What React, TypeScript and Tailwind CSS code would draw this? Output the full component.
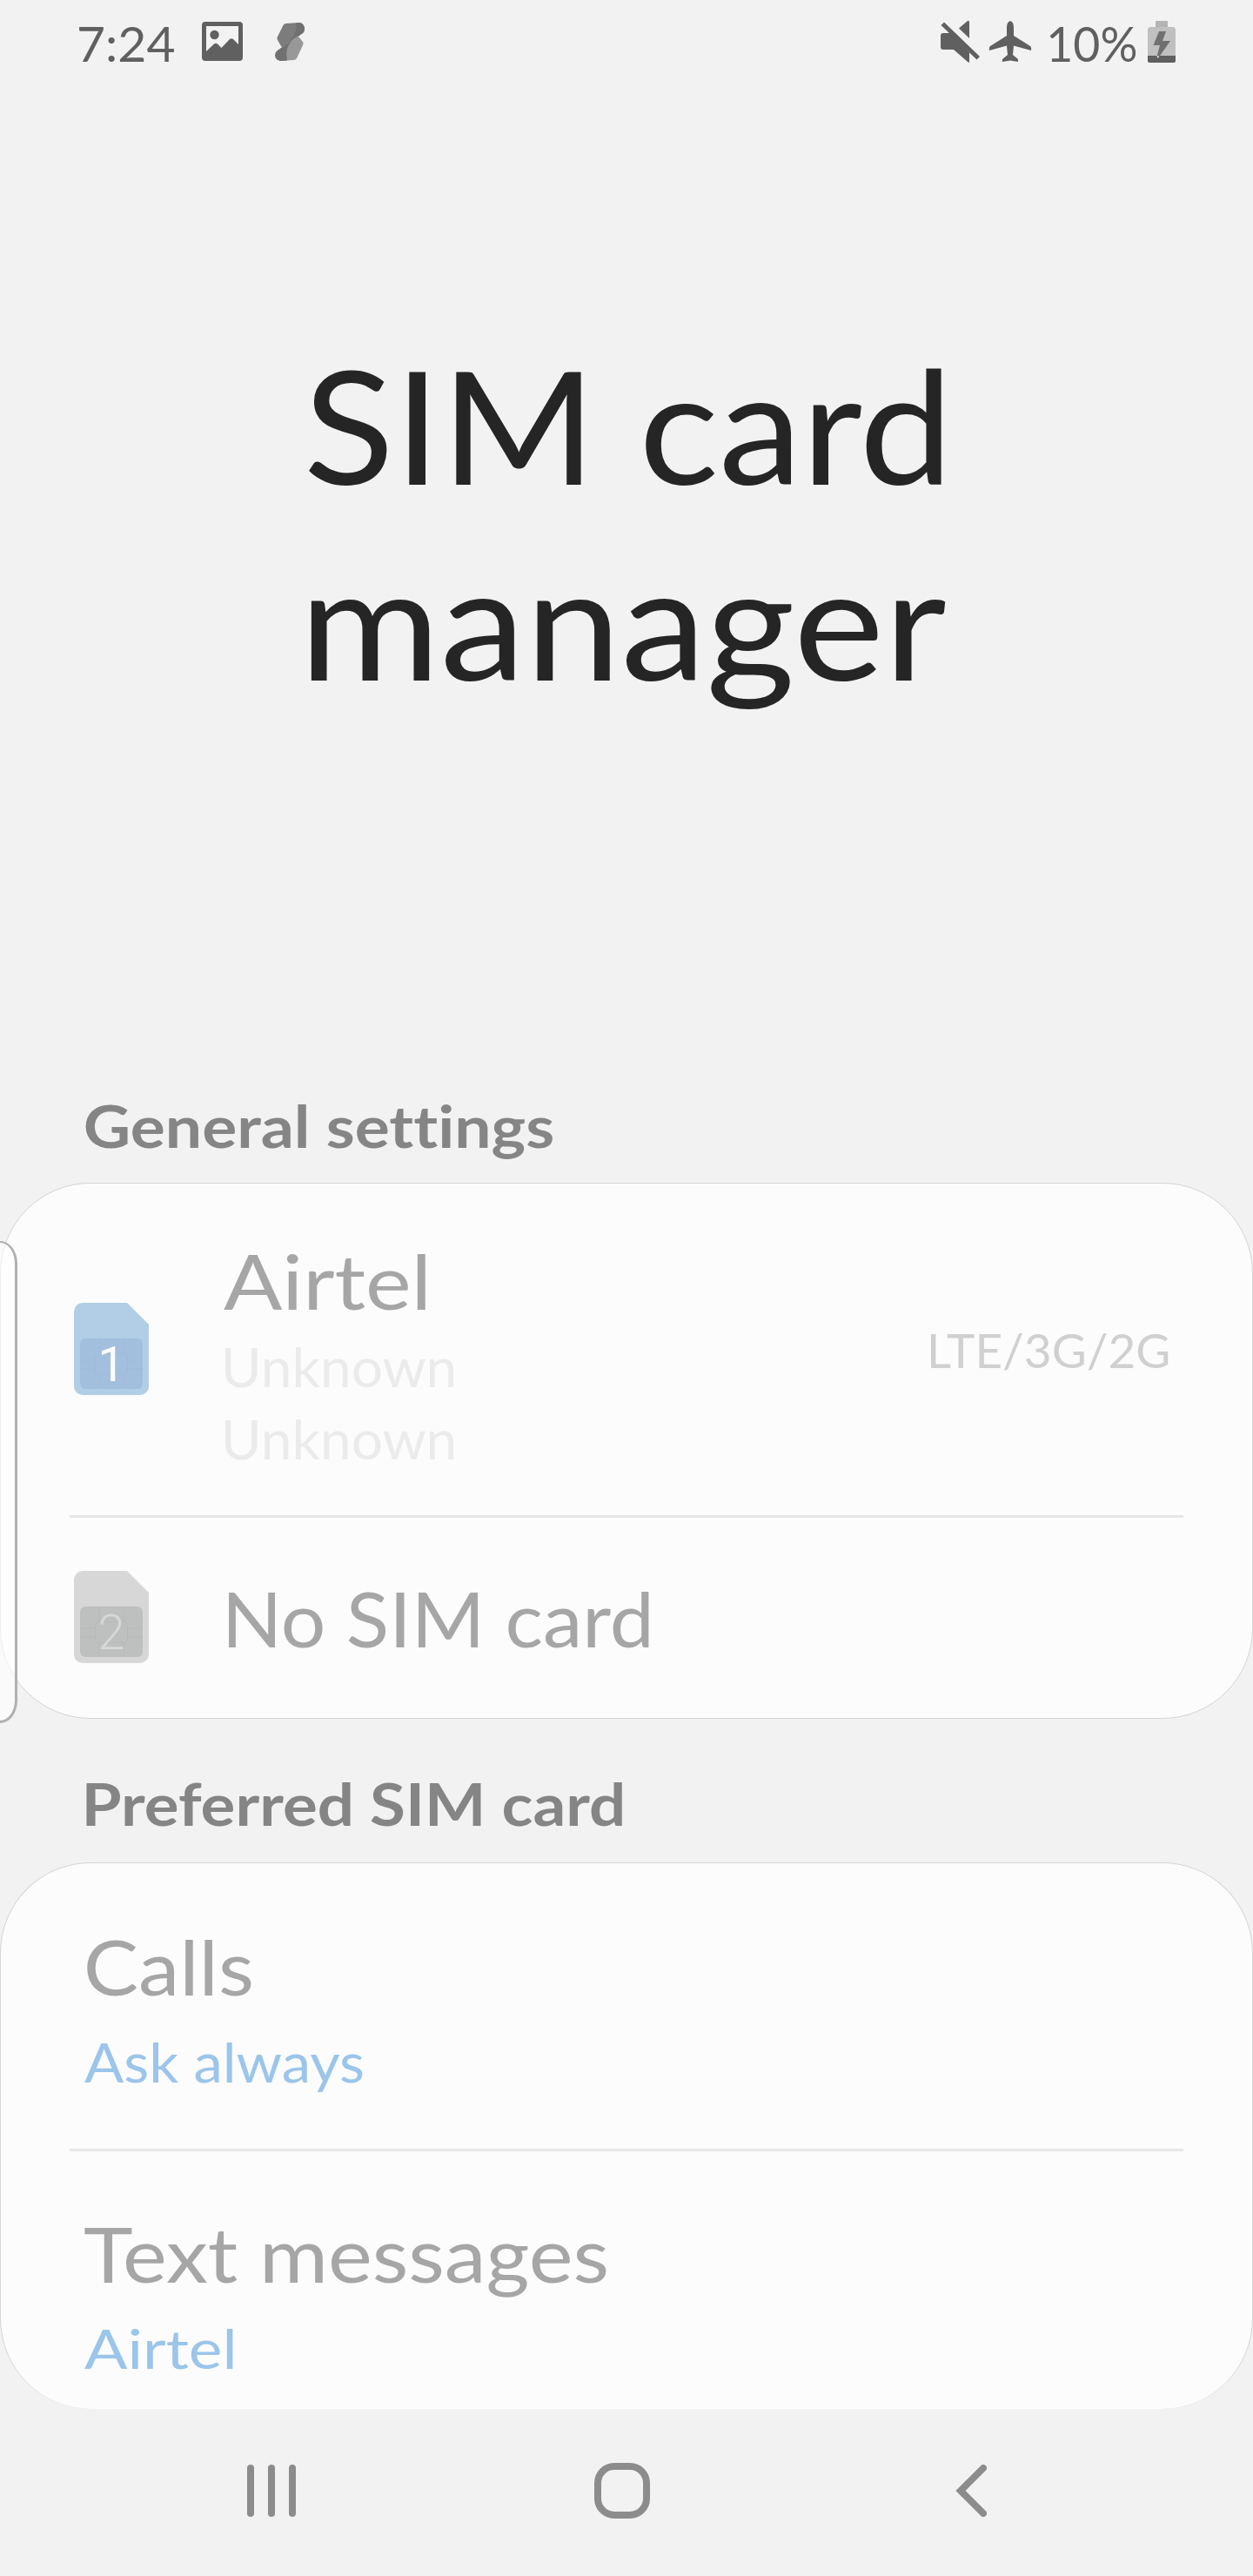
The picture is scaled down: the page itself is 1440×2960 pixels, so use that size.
import { useLayoutEffect, useRef } from "react";

type FitProps = { text: string; width: number; className?: string };

/** One line of text whose visible ink spans exactly `width` pixels. */
function Fit({ text, width, className = "" }: FitProps) {
  const box = useRef<HTMLDivElement>(null);
  const inner = useRef<HTMLSpanElement>(null);
  useLayoutEffect(() => {
    const el = inner.current;
    const ctx = document.createElement("canvas").getContext("2d");
    if (!el || !box.current || !ctx) return;
    const css = getComputedStyle(el);
    ctx.font = `${css.fontWeight} ${css.fontSize} ${css.fontFamily}`;
    const m = ctx.measureText(text);
    // The canvas may join letters that the page keeps apart, so the advance comes from the element.
    const ink = m.actualBoundingBoxRight + m.actualBoundingBoxLeft + (el.offsetWidth - m.width);
    const scale = width / ink;
    box.current.style.width = `${width}px`;
    el.style.transform = `translateX(${m.actualBoundingBoxLeft * scale}px) scaleX(${scale})`;
  }, [text, width]);
  return (
    <div ref={box} className={`whitespace-nowrap [font-variant-ligatures:none] ${className}`}>
      <span ref={inner} className="inline-block origin-left">
        {text}
      </span>
    </div>
  );
}

type SimIconProps = { slot: string; weight: number; body: string; chip: string; line: string; digit: string };

function SimIcon({ slot, weight, body, chip, line, digit }: SimIconProps) {
  return (
    <svg width="86" height="106" viewBox="0 0 86 106" className="mb-[2px] shrink-0">
      <path d="M10 0H61L86 25V96a10 10 0 0 1-10 10H10A10 10 0 0 1 0 96V10A10 10 0 0 1 10 0Z" fill={body} />
      <rect x="7" y="41" width="72" height="58" rx="6" fill={chip} />
      <g stroke={line} strokeWidth="1" fill="none">
        <path d="M29 41V58M57 41V58M29 83V99M57 83V99M7 66H24M7 76H24M62 66H79M62 76H79" />
        <rect x="24.500" y="58.500" width="37" height="24" rx="3" />
      </g>
      <text x="43" y="90" textAnchor="middle" fontFamily="Roboto, sans-serif" fontWeight={weight} fontSize="56" fill={digit}>
        {slot}
      </text>
    </svg>
  );
}

function StatusBar() {
  return (
    <header className="flex h-[100px] justify-between pr-[89px] pl-[91px] text-[#606060]">
      <div className="flex">
        <Fit text="7:24" width={109} className="mt-[14px] text-[57px] leading-[70px]" />
        <svg width="47" height="45" viewBox="0 0 47 45" className="mt-[25px] ml-[32px]">
          <path
            fillRule="evenodd"
            fill="currentColor"
            d="M4 0H43a4 4 0 0 1 4 4V41a4 4 0 0 1-4 4H4a4 4 0 0 1-4-4V4A4 4 0 0 1 4 0ZM5 5V34L14 25.500Q16 24 18 25.500L22.500 30L32 20Q34 18.500 36 20L42 26V5Z"
          />
          <circle cx="14.500" cy="15" r="5.200" fill="currentColor" />
        </svg>
        <svg width="35" height="45" viewBox="0 0 35 45" className="mt-[26px] ml-[37px]">
          <path d="M13 1L27 0C34 0 36 8 32 12L9 28Q8 29 7 27L3 20Q2 18 3 16L9 4Q10 1 13 1Z" fill="#7c7c7c" />
          <path d="M25 0H27C34 0 36 8 32 12L14 25C19 20 25 12 25 0Z" fill="#707070" />
          <path d="M27 16L32 22Q33 24 32 26L25 41Q24 43 21 43L7 44C0 44-2 36 3 32L25 16Q26 15 27 16Z" fill="#989898" />
          <path d="M20 20C14 26 12 35 14 43.500L7 44C0 44-2 36 3 32Z" fill="#707070" />
        </svg>
      </div>
      <div className="flex">
        <svg width="46" height="50" viewBox="0 0 46 50" className="mt-[23px]" fill="currentColor">
          <path d="M3 15H11L33 37V49L31 48L15 34H3Q0 34 0 31V18Q0 15 3 15Z" />
          <path d="M21 9.500L31 1Q33 0 33 3V21Z" />
          <path d="M0.500 6L4 2.500L45 42L41.500 45.500Z" />
        </svg>
        <svg width="50" height="48" viewBox="0 0 50 48" className="mt-[24px] ml-[9px]" fill="currentColor">
          <path d="M25 0Q29 1 29 8V17L48 29Q49.500 30 49 34L29 28.500L28 39L34 44V47L25 45.500L16 47V44L22 39L21 28.500L1 34Q0.500 30 2 29L21 17V8Q21 1 25 0Z" />
        </svg>
        <Fit text="10%" width={100} className="mt-[14px] ml-[20px] text-[57px] leading-[70px]" />
        <svg width="32" height="48" viewBox="0 0 32 48" className="mt-[24px] ml-[13px]">
          <path d="M9 0H23V7H9Z" fill="#b4b4b4" />
          <path d="M2 7H30L32 9V40H0V9Z" fill="#c0c0c0" />
          <path d="M0 40H32V46a2 2 0 0 1-2 2H2a2 2 0 0 1-2-2Z" fill="#606060" />
          <path d="M13 12H21L17 23H26L12 43L10.500 41L14 28H6.500Z" fill="#707070" />
          <path d="M10.500 39.500L13 41L11.500 43Z" fill="#f1f1f1" />
        </svg>
      </div>
    </header>
  );
}

function Divider() {
  return <div className="mr-[79px] ml-[79px] h-[3px] bg-[#e6e6e6]" />;
}

const item = "text-[87px] leading-[104px] text-[#a6a6a6]";
const sub = "text-[61px] leading-[83px]";
const heading = "text-[67px] font-bold leading-[80px] text-[#858585]";

export default function App() {
  return (
    <div className="relative flex h-[2960px] w-[1440px] flex-col overflow-hidden bg-[#f2f2f2] font-['Lato',sans-serif]">
      <StatusBar />

      <h1 className="mt-[275px] flex flex-col items-center text-[180px] leading-[225px] text-[#252525]">
        <Fit text="SIM card" width={728} className="mr-[4px]" />
        <Fit text="manager" width={730} className="ml-[4px]" />
      </h1>

      <h2 className={heading}>
        <Fit text="General settings" width={537} className="mt-[428px] ml-[98px]" />
      </h2>

      <section className="mt-[26px] h-[616px] rounded-[104px] border border-[#d4d4d4] bg-[#fcfcfc]">
        <div className="flex h-[381px] items-center pl-[84px]">
          <SimIcon slot="1" weight={400} body="#b2cee6" chip="#a3bfde" line="#9fbbda" digit="#fcfcfc" />
          <div className="pt-[13px] pl-[86px]">
            <Fit text="Airtel" width={233} className={item} />
            <div className="mt-[5px] ml-[2px] text-[#ebebeb]">
              <Fit text="Unknown" width={263} className={sub} />
              <Fit text="Unknown" width={263} className={sub} />
            </div>
          </div>
          <Fit text="LTE/3G/2G" width={273} className="mr-[96px] ml-auto text-[55px] leading-[60px] text-[#d0d0d0]" />
        </div>
        <Divider />
        <div className="flex h-[230px] items-center pl-[84px]">
          <SimIcon slot="2" weight={300} body="#d7d7d7" chip="#bebfbf" line="#bab8b8" digit="#d7d7d7" />
          <Fit text="No SIM card" width={484} className={`mt-[2px] ml-[91px] ${item}`} />
        </div>
      </section>

      <h2 className={heading}>
        <Fit text="Preferred SIM card" width={616} className="mt-[57px] ml-[99px]" />
      </h2>

      <section className="mt-[28px] h-[628px] rounded-[104px] border border-b-0 border-[#d4d4d4] bg-[#fcfcfc]">
        <div className="h-[328px] pt-[67px] pl-[96px]">
          <Fit text="Calls" width={189} className={`ml-[3px] ${item}`} />
          <Fit text="Ask always" width={320} className={`mt-[16px] text-[#9bc5ea] ${sub}`} />
        </div>
        <Divider />
        <div className="pt-[66px] pl-[96px]">
          <Fit text="Text messages" width={600} className={item} />
          <Fit text="Airtel" width={170} className={`mt-[15px] text-[#9bc5ea] ${sub}`} />
        </div>
      </section>

      <nav className="ml-[111px] grid h-[188px] grid-cols-[402px_402px_402px] place-items-center">
        <div className="flex gap-[16px]">
          <span className="h-[60px] w-[8px] rounded-full bg-[#8c8c8c]" />
          <span className="h-[60px] w-[8px] rounded-full bg-[#8c8c8c]" />
          <span className="h-[60px] w-[8px] rounded-full bg-[#8c8c8c]" />
        </div>
        <div className="ml-[2px] h-[64px] w-[64px] rounded-[23px] border-8 border-[#8c8c8c]" />
        <svg width="36" height="60" viewBox="0 0 36 60" fill="none" stroke="#8c8c8c" strokeWidth="8" strokeLinecap="round">
          <path d="M32 4L6 30L32 56" />
        </svg>
      </nav>

      <div className="absolute top-[1426px] -left-[20px] h-[554px] w-[40px] rounded-[20px/26px] border-3 border-t-2 border-[#b0b0b0] bg-white/60" />
    </div>
  );
}
